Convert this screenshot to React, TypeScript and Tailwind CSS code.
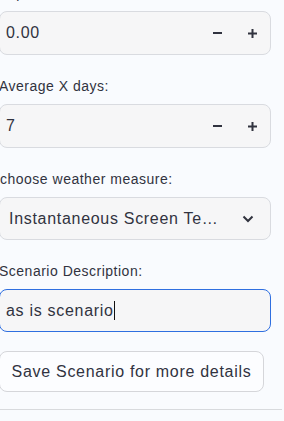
const Minus = () => <span className="block h-[2px] w-[9px] bg-[#31333f]" />;

const Plus = () => (
  <svg width="9" height="9" viewBox="0 0 9 9">
    <path d="M0 4.5h9M4.5 0v9" stroke="#31333f" strokeWidth="2" />
  </svg>
);

const Label = ({ text, className = "" }: { text: string; className?: string }) => (
  <div className={`h-[21px] text-[14px] leading-[21px] tracking-[0.5px] text-[#31333f] ${className}`}>{text}</div>
);

const NumberInput = ({ value }: { value: string }) => (
  <div className="mt-[7px] flex h-[44px] w-[272px] items-center rounded-lg border border-[#d9dbe0] bg-[#f6f6f7]">
    <span className="flex-1 pl-[6px] text-[16px] tracking-[0.7px] text-[#31333f]">{value}</span>
    <button className="flex h-full w-[35px] items-center justify-center">
      <Minus />
    </button>
    <button className="flex h-full w-[35px] items-center justify-center">
      <Plus />
    </button>
  </div>
);

export default function App() {
  return (
    <div
      className="h-[421px] w-[284px] overflow-hidden bg-[#f9fbfe]"
      style={{ fontFamily: '"Liberation Sans", Arial, sans-serif' }}
    >
      <div className="ml-[-1px] flex flex-col">
        <Label text="Exposure:" className="mt-[-17px]" />
        <NumberInput value="0.00" />

        <Label text="Average X days:" className="mt-[21px]" />
        <NumberInput value="7" />

        <Label text="choose weather measure:" className="mt-[21px] ml-[1px]" />
        <div className="mt-[7px] flex h-[43px] w-[272px] items-center rounded-lg border border-[#d9dbe0] bg-[#f6f6f7] pl-[9px] pr-[16px]">
          <span className="flex-1 truncate text-[16px] tracking-[0.7px] text-[#31333f]">Instantaneous Screen Te…</span>
          <svg width="12" height="8" viewBox="0 0 12 8" className="ml-[20px] shrink-0">
            <path d="M1.5 1.5l4.5 4.5 4.5-4.5" fill="none" stroke="#31333f" strokeWidth="2" />
          </svg>
        </div>

        <Label text="Scenario Description:" className="mt-[21px]" />
        <div className="mt-[7px] flex h-[43px] w-[272px] items-center rounded-lg border border-[#2f6fe0] bg-[#f6f6f7] pl-[6px]">
          <span className="text-[16px] tracking-[0.7px] text-[#31333f]">as is scenario</span>
          <span className="h-[19px] w-[1px] bg-[#111]" />
        </div>

        <button className="mt-[19px] flex h-[41px] w-[265px] items-center justify-center rounded-lg border border-[#d5d6da] bg-[#fcfdff] text-[16px] tracking-[0.7px] text-[#31333f]">
          Save Scenario for more details
        </button>

        <div className="mt-[17px] h-[1px] w-[283px] bg-[#d8dadd]" />
      </div>
    </div>
  );
}
